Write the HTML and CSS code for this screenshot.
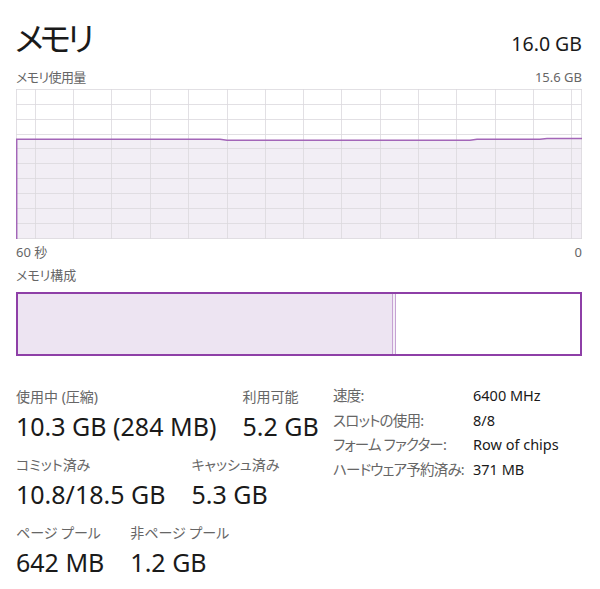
FILE: index.html
```html
<!DOCTYPE html>
<html lang="ja">
<head>
<meta charset="utf-8">
<title>メモリ</title>
<link rel="stylesheet" href="styles.css">
</head>
<body>
<div class="page">
  <header class="head">
    <h1 class="title">メモリ</h1>
    <div class="total">16.0 GB</div>
  </header>
  <div class="chart-head"><span>メモリ使用量</span><span>15.6 GB</span></div>
  <svg class="chart" width="566" height="150" viewBox="0 0 566 150">
    <path class="area" d="M0.5,50.3 L204,50.3 L211,51.3 L454,51.3 L461,50.3 L524,50.3 L531,49.5 L566,49.5 L566,150 L0.5,150 Z"/>
    <g class="grid">
      <line x1="0" y1="0.5" x2="566" y2="0.5"/>
      <line x1="0" y1="15.5" x2="566" y2="15.5"/>
      <line x1="0" y1="30.5" x2="566" y2="30.5"/>
      <line x1="0" y1="45.5" x2="566" y2="45.5"/>
      <line x1="0" y1="59.5" x2="566" y2="59.5"/>
      <line x1="0" y1="74.5" x2="566" y2="74.5"/>
      <line x1="0" y1="89.5" x2="566" y2="89.5"/>
      <line x1="0" y1="104.5" x2="566" y2="104.5"/>
      <line x1="0" y1="119.5" x2="566" y2="119.5"/>
      <line x1="0" y1="134.5" x2="566" y2="134.5"/>
      <line x1="0" y1="149.5" x2="566" y2="149.5"/>
      <line x1="0.5" y1="0" x2="0.5" y2="150"/>
      <line x1="19.5" y1="0" x2="19.5" y2="150"/>
      <line x1="57.5" y1="0" x2="57.5" y2="150"/>
      <line x1="95.5" y1="0" x2="95.5" y2="150"/>
      <line x1="134.5" y1="0" x2="134.5" y2="150"/>
      <line x1="172.5" y1="0" x2="172.5" y2="150"/>
      <line x1="211.5" y1="0" x2="211.5" y2="150"/>
      <line x1="249.5" y1="0" x2="249.5" y2="150"/>
      <line x1="287.5" y1="0" x2="287.5" y2="150"/>
      <line x1="325.5" y1="0" x2="325.5" y2="150"/>
      <line x1="364.5" y1="0" x2="364.5" y2="150"/>
      <line x1="402.5" y1="0" x2="402.5" y2="150"/>
      <line x1="440.5" y1="0" x2="440.5" y2="150"/>
      <line x1="479.5" y1="0" x2="479.5" y2="150"/>
      <line x1="517.5" y1="0" x2="517.5" y2="150"/>
      <line x1="555.5" y1="0" x2="555.5" y2="150"/>
      <line x1="565.5" y1="0" x2="565.5" y2="150"/>
    </g>
    <path class="line" d="M0.7,150 L0.7,50.3 L204,50.3 L211,51.3 L454,51.3 L461,50.3 L524,50.3 L531,49.5 L566,49.5"/>
  </svg>
  <div class="chart-foot"><span>60 秒</span><span>0</span></div>
  <div class="comp-label">メモリ構成</div>
  <div class="comp">
    <div class="comp-used"></div>
    <div class="comp-sep"></div>
    <div class="comp-free"></div>
  </div>
  <section class="stats">
    <div class="stats-left">
      <div class="row">
        <div class="stat"><div class="lbl">使用中 (圧縮)</div><div class="val">10.3 GB (284 MB)</div></div>
        <div class="stat"><div class="lbl">利用可能</div><div class="val">5.2 GB</div></div>
      </div>
      <div class="row">
        <div class="stat"><div class="lbl">コミット済み</div><div class="val">10.8/18.5 GB</div></div>
        <div class="stat"><div class="lbl">キャッシュ済み</div><div class="val">5.3 GB</div></div>
      </div>
      <div class="row">
        <div class="stat"><div class="lbl">ページ プール</div><div class="val">642 MB</div></div>
        <div class="stat"><div class="lbl">非ページ プール</div><div class="val">1.2 GB</div></div>
      </div>
    </div>
    <dl class="stats-right">
      <dt>速度:</dt><dd>6400 MHz</dd>
      <dt>スロットの使用:</dt><dd>8/8</dd>
      <dt>フォーム ファクター:</dt><dd>Row of chips</dd>
      <dt>ハードウェア予約済み:</dt><dd>371 MB</dd>
    </dl>
  </section>
</div>
</body>
</html>
```
FILE: styles.css
```css
* { box-sizing: border-box; }
html, body { margin: 0; padding: 0; background: #ffffff; }
body {
  font-family: "Noto Sans", "Noto Sans CJK JP", sans-serif;
  font-feature-settings: "palt";
  color: #1a1a1a;
}
.page {
  width: 600px;
  padding: 17px 18px 0 15px;
}
.head {
  display: flex;
  justify-content: space-between;
  align-items: baseline;
  height: 49px;
}
.title {
  margin: 0;
  font-size: 33px;
  font-weight: 400;
  line-height: 44px;
  letter-spacing: -4px;
}
.total {
  font-size: 19.5px;
  line-height: 26px;
}
.chart-head, .chart-foot {
  display: flex;
  justify-content: space-between;
  font-size: 13px;
  line-height: 20px;
  color: #666666;
  padding-left: 1px;
}
.chart-head { height: 23px; padding-top: 1px; }
.chart-head span:first-child { letter-spacing: -0.6px; }
.chart {
  display: block;
  margin-left: 1px;
}
.chart .area { fill: #f2eef5; }
.chart .grid line { stroke: #dcd9de; stroke-width: 1; opacity: 0.8; }
.chart .line { fill: none; stroke: #a366b8; stroke-width: 1.5; }
.chart-foot { height: 24px; padding-top: 3px; }
.comp-label {
  font-size: 13px;
  line-height: 20px;
  color: #666666;
  height: 29px;
  padding-top: 2px;
  padding-left: 1px;
}
.comp {
  display: flex;
  width: 566px;
  height: 64px;
  margin-left: 1px;
  border: 2px solid #8e3fa7;
}
.comp-used { width: 374px; background: #ede4f2; }
.comp-sep {
  width: 4px;
  background: #f4eef7;
  border-left: 1px solid #c6a2d3;
  border-right: 1px solid #c6a2d3;
}
.comp-free { flex: 1; background: #ffffff; }
.stats {
  display: flex;
  padding-top: 31px;
  padding-left: 1px;
}
.stats-left {
  width: 317px;
  display: flex;
  flex-direction: column;
  gap: 12px;
}
.row {
  display: flex;
  gap: 26px;
}
.stat { display: flex; flex-direction: column; }
.lbl {
  font-size: 14px;
  line-height: 20px;
  color: #666666;
}
.val {
  font-size: 25px;
  line-height: 34px;
  margin-top: 2px;
  color: #1a1a1a;
}
.stats-right {
  margin: -4px 0 0 0;
  display: grid;
  grid-template-columns: 140px auto;
  grid-auto-rows: 24.5px;
  align-content: start;
  font-size: 14.5px;
  line-height: 24.5px;
}
.stats-right dt { color: #666666; letter-spacing: -0.8px; }
.stats-right dd { margin: 0; color: #1a1a1a; }
```
